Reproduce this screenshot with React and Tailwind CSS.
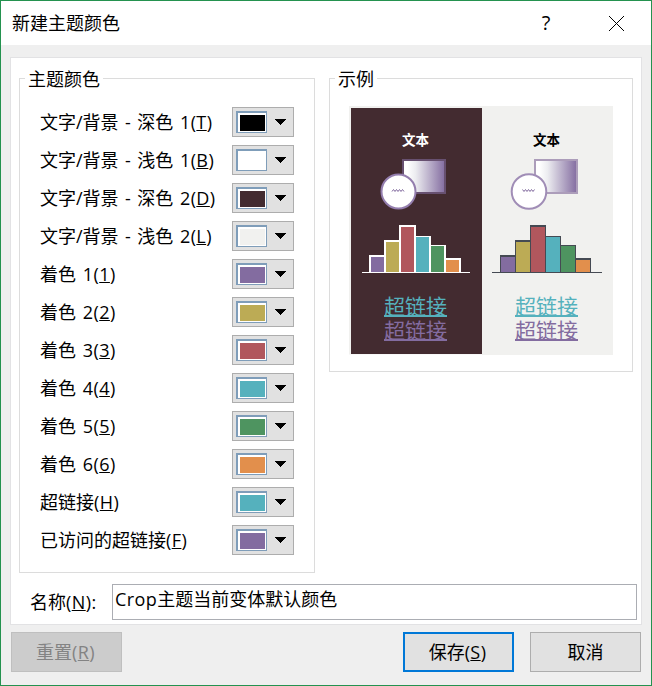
import React from "react";

const ROWS = [
  { label: "文字/背景 - 深色", index: "1", hotkey: "T", color: "#000000" },
  { label: "文字/背景 - 浅色", index: "1", hotkey: "B", color: "#ffffff" },
  { label: "文字/背景 - 深色", index: "2", hotkey: "D", color: "#432b30" },
  { label: "文字/背景 - 浅色", index: "2", hotkey: "L", color: "#f1f1ef" },
  { label: "着色", index: "1", hotkey: "1", color: "#836ca0" },
  { label: "着色", index: "2", hotkey: "2", color: "#bcab55" },
  { label: "着色", index: "3", hotkey: "3", color: "#b1575d" },
  { label: "着色", index: "4", hotkey: "4", color: "#55b1bd" },
  { label: "着色", index: "5", hotkey: "5", color: "#4e9460" },
  { label: "着色", index: "6", hotkey: "6", color: "#e28f4c" },
  { label: "超链接", hotkey: "H", color: "#55b1bd" },
  { label: "已访问的超链接", hotkey: "F", color: "#836ca0" },
];

function Key({ children }) {
  return (
    <span className="tracking-[0.4px]">
      (<span className="underline decoration-1 underline-offset-[1px] [text-decoration-skip-ink:none]">{children}</span>)
    </span>
  );
}

function ColorButton({ color }) {
  return (
    <button className="flex h-[30px] w-[62px] items-start border border-[#adadad] bg-[#e1e1e1] pt-[3px] pl-[3px]">
      <span className="block h-[22px] w-[31px] border-t-2 border-r border-b border-l-2 border-[#7f9db9] bg-white pt-0.5 pl-0.5">
        <span className="block h-4 w-[25px]" style={{ backgroundColor: color }} />
      </span>
      <svg className="mt-2 ml-2" width="11" height="6" shapeRendering="crispEdges">
        <path d="M0 0h11v1h-1v1h-1v1h-1v1h-1v1h-1v1h-1v-1h-1v-1h-1v-1h-1v-1h-1v-1h-1z" fill="#000" />
      </svg>
    </button>
  );
}

const COLORS = ["#836ca0", "#bcab55", "#b1575d", "#55b1bd", "#4e9460", "#e28f4c"];

// Each bar: outline x, outline y, outline width, fill x, fill y, fill width
const DARK_BARS = [
  [20, 149, 17, 22, 151, 13],
  [35, 134, 17, 37, 136, 13],
  [65, 130, 17, 67, 131, 13],
  [80, 139, 17, 82, 140, 13],
  [95, 152, 17, 97, 154, 13],
  [50, 119, 17, 52, 121, 13],
];
const LIGHT_BARS = [
  [151, 149, 16, 152, 151, 14],
  [166, 134, 16, 167, 136, 14],
  [196, 130, 16, 197, 131, 14],
  [211, 139, 16, 212, 140, 14],
  [226, 152, 16, 227, 154, 14],
  [181, 119, 16, 182, 121, 14],
];
const BAR_COLORS = [COLORS[0], COLORS[1], COLORS[3], COLORS[4], COLORS[5], COLORS[2]];

function Bars({ bars, outline }) {
  return (
    <g shapeRendering="crispEdges">
      {bars.map((b, i) => (
        <rect key={i} x={b[0]} y={b[1]} width={b[2]} height={167 - b[1]} fill={outline} />
      ))}
      {bars.map((b, i) => (
        <rect key={"f" + i} x={b[3]} y={b[4]} width={b[5]} height={166 - b[4]} fill={BAR_COLORS[i]} />
      ))}
    </g>
  );
}

function Preview() {
  return (
    <svg width="264" height="249" className="block font-['Noto_Sans_CJK_SC',sans-serif]">
      <defs>
        <linearGradient id="fade" x1="0" x2="1" y1="0" y2="0">
          <stop offset="0.1" stopColor="#ffffff" />
          <stop offset="0.3" stopColor="#ececf0" />
          <stop offset="1" stopColor="#836ca0" />
        </linearGradient>
      </defs>
      <rect width="264" height="249" fill="#f1f1ef" />
      <rect x="0" y="248" width="133" height="1" fill="#f8f8f8" />
      <rect x="2" y="2" width="131" height="246" fill="#432b30" />

      <text x="53" y="39" fontSize="13.5" fontWeight="700" fill="#fff">文本</text>
      <rect x="54" y="54" width="42" height="33" fill="url(#fade)" stroke="#675070" strokeWidth="2" />
      <circle cx="49.5" cy="85.5" r="17" fill="#fff" stroke="#947eae" strokeWidth="2" />
      <path d="M43 85.5l1.5-2 1.5 2 1.5-2 1.5 2 1.5-2 1.5 2 1.5-2 1.5 2" fill="none" stroke="#836ca0" />
      <Bars bars={DARK_BARS} outline="#ffffff" />
      <rect x="13" y="166" width="108" height="1" fill="#fff" />
      <text x="35" y="208" fontSize="21" fill={COLORS[3]}>超链接</text>
      <rect x="35" y="209" width="63" height="2" fill={COLORS[3]} />
      <text x="35" y="232" fontSize="21" fill={COLORS[0]}>超链接</text>
      <rect x="35" y="233" width="63" height="2" fill={COLORS[0]} />

      <text x="184" y="39" fontSize="13.5" fontWeight="700" fill="#000">文本</text>
      <rect x="186" y="54" width="42" height="33" fill="url(#fade)" stroke="#ac9dba" strokeWidth="2" />
      <circle cx="180" cy="85.5" r="17.3" fill="#fff" stroke="#a08db6" strokeWidth="2" />
      <path d="M173.5 83.5l1.5 2 1.5-2 1.5 2 1.5-2 1.5 2 1.5-2 1.5 2 1.5-2" fill="none" stroke="#836ca0" />
      <Bars bars={LIGHT_BARS} outline="#454a53" />
      <rect x="143" y="166" width="110" height="1" fill="#454a53" />
      <text x="166" y="208" fontSize="21" fill={COLORS[3]}>超链接</text>
      <rect x="166" y="209" width="63" height="2" fill={COLORS[3]} />
      <text x="166" y="232" fontSize="21" fill={COLORS[0]}>超链接</text>
      <rect x="166" y="233" width="63" height="2" fill={COLORS[0]} />
    </svg>
  );
}

export default function App() {
  return (
    <div className="flex h-[686px] w-[652px] flex-col overflow-hidden border border-[#24924f] bg-[#efefef] font-['Open_Sans','Noto_Sans_CJK_SC',sans-serif] text-[18px] leading-6 text-black">
      <header className="flex h-11 shrink-0 items-center bg-white pl-[11px]">
        <h1 className="flex-1">新建主题颜色</h1>
        <span className="w-[10px] text-center text-[20px]">?</span>
        <svg className="mr-[26px] ml-[57px]" width="17" height="17">
          <path d="M1 1l15 15M16 1L1 16" stroke="#000" strokeWidth="1" fill="none" />
        </svg>
      </header>

      <main className="mt-3 ml-[9px] flex h-[568px] w-[632px] shrink-0 flex-col border border-[#e2e2e4] bg-white pt-2">
        <div className="flex items-start gap-[14px] pl-2">
          <fieldset className="h-[507px] w-[296px] border border-[#dcdcdc] pt-4 pr-5 pl-5">
            <legend className="ml-[-15px] h-[25px] px-[3px] leading-[26px]">主题颜色</legend>
            <div className="flex flex-col gap-2">
              {ROWS.map((r) => (
                <div key={r.hotkey} className="flex h-[30px] items-center justify-between whitespace-nowrap">
                  <span className="[word-spacing:1.7px]">
                    {r.label}
                    {r.index && <span className="tracking-[0.4px]"> {r.index}</span>}
                    <Key>{r.hotkey}</Key>
                  </span>
                  <ColorButton color={r.color} />
                </div>
              ))}
            </div>
          </fieldset>
          <fieldset className="h-[306px] w-[304px] border border-[#dcdcdc] pt-[15px] pl-[19px]">
            <legend className="ml-[-14px] h-[25px] px-[3px] leading-[26px]">示例</legend>
            <Preview />
          </fieldset>
        </div>
        <div className="mt-[11px] flex items-center pl-[19px]">
          <label className="w-[82px]">
            名称
            <Key>N</Key>:
          </label>
          <div className="h-9 w-[525px] border border-[#abadb3] bg-white pt-[2px] pl-[2px]">
            <span className="tracking-[0.4px]">Crop</span>主题当前变体默认颜色
          </div>
        </div>
      </main>

      <footer className="mt-[7px] flex pl-[10px]">
        <button className="h-10 w-[111px] border border-[#bfbfbf] bg-[#cccccc] pr-[2px] text-[#838383]">
          重置<Key>R</Key>
        </button>
        <button className="ml-[281px] h-10 w-[111px] border-2 border-[#0078d7] bg-[#e1e1e1] pr-[2px]">
          保存<Key>S</Key>
        </button>
        <button className="ml-4 h-10 w-[111px] border border-[#adadad] bg-[#e1e1e1]">取消</button>
      </footer>
    </div>
  );
}
